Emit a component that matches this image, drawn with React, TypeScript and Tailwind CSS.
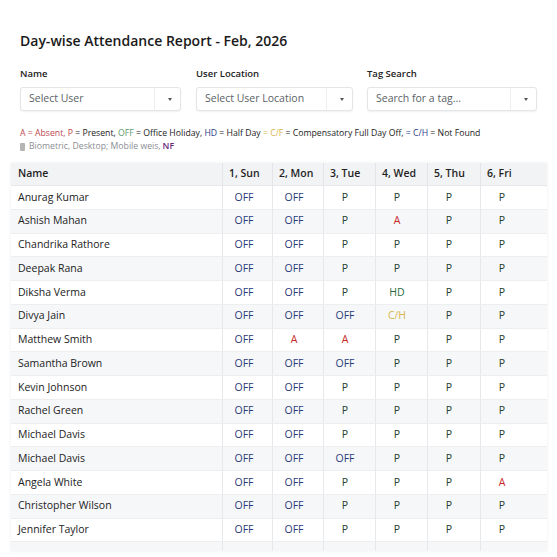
type Status = 'OFF' | 'P' | 'A' | 'HD' | 'C/H' | ''

interface Row {
  name: string
  days: Status[]
}

const days = ['1, Sun', '2, Mon', '3, Tue', '4, Wed', '5, Thu', '6, Fri']

const rows: Row[] = [
  { name: 'Anurag Kumar', days: ['OFF', 'OFF', 'P', 'P', 'P', 'P'] },
  { name: 'Ashish Mahan', days: ['OFF', 'OFF', 'P', 'A', 'P', 'P'] },
  { name: 'Chandrika Rathore', days: ['OFF', 'OFF', 'P', 'P', 'P', 'P'] },
  { name: 'Deepak Rana', days: ['OFF', 'OFF', 'P', 'P', 'P', 'P'] },
  { name: 'Diksha Verma', days: ['OFF', 'OFF', 'P', 'HD', 'P', 'P'] },
  { name: 'Divya Jain', days: ['OFF', 'OFF', 'OFF', 'C/H', 'P', 'P'] },
  { name: 'Matthew Smith', days: ['OFF', 'A', 'A', 'P', 'P', 'P'] },
  { name: 'Samantha Brown', days: ['OFF', 'OFF', 'OFF', 'P', 'P', 'P'] },
  { name: 'Kevin Johnson', days: ['OFF', 'OFF', 'P', 'P', 'P', 'P'] },
  { name: 'Rachel Green', days: ['OFF', 'OFF', 'P', 'P', 'P', 'P'] },
  { name: 'Michael Davis', days: ['OFF', 'OFF', 'P', 'P', 'P', 'P'] },
  { name: 'Michael Davis', days: ['OFF', 'OFF', 'OFF', 'P', 'P', 'P'] },
  { name: 'Angela White', days: ['OFF', 'OFF', 'P', 'P', 'P', 'A'] },
  { name: 'Christopher Wilson', days: ['OFF', 'OFF', 'P', 'P', 'P', 'P'] },
  { name: 'Jennifer Taylor', days: ['OFF', 'OFF', 'P', 'P', 'P', 'P'] },
  // partially scrolled row, clipped by the container
  { name: '', days: ['', '', '', '', '', ''] },
]

const statusColor: Record<Status, string> = {
  OFF: 'text-[#2b3a7a]',
  P: 'text-[#22402e]',
  A: 'text-[#c62828]',
  HD: 'text-[#2e6b3c]',
  'C/H': 'text-[#d6b54a]',
  '': '',
}

// column template shared by header and rows
const cols = 'grid grid-cols-[211px_50px_51px_52px_52px_53px_1fr]'

function SelectBox({ placeholder, width }: { placeholder: string; width: string }) {
  return (
    <div
      className={`${width} h-[24px] flex items-center bg-white border border-[#e3e5e8] rounded-[3px] shadow-[0_1px_2px_rgba(0,0,0,0.06)]`}
    >
      <span className="flex-1 pl-[8px] text-[10.5px] text-[#5b5f66] truncate">{placeholder}</span>
      <div className="h-full w-[14px] border-l border-[#eceef0]" />
      <div className="w-[12px] flex justify-start">
        <div className="w-0 h-0 border-l-[2.5px] border-r-[2.5px] border-t-[3px] border-l-transparent border-r-transparent border-t-[#555]" />
      </div>
    </div>
  )
}

export default function App() {
  return (
    <div className="w-[557px] h-[557px] overflow-hidden bg-white font-['Open_Sans',sans-serif] text-[#222]">
      {/* title */}
      <h1 className="pl-[20px] pt-[31px] text-[14px] leading-[20px] font-semibold text-[#1a1a1a]">
        Day-wise Attendance Report - Feb, 2026
      </h1>

      {/* filters */}
      <div className="flex pl-[20px] mt-[16px]">
        <div className="w-[176px]">
          <div className="text-[9.5px] font-semibold leading-[13px] mb-[7px]">Name</div>
          <SelectBox placeholder="Select User" width="w-[161px]" />
        </div>
        <div className="w-[171px]">
          <div className="text-[9.5px] font-semibold leading-[13px] mb-[7px]">User Location</div>
          <SelectBox placeholder="Select User Location" width="w-[157px]" />
        </div>
        <div>
          <div className="text-[9.5px] font-semibold leading-[13px] mb-[7px]">Tag Search</div>
          <SelectBox placeholder="Search for a tag..." width="w-[170px]" />
        </div>
      </div>

      {/* legend */}
      <div className="pl-[20px] mt-[16px] text-[8.7px] leading-[13px]">
        <div className="whitespace-nowrap">
          <span className="text-[#c0464f]">A = Absent, P</span>
          <span className="text-[#222]"> = Present, </span>
          <span className="text-[#5e9a6a]">OFF</span>
          <span className="text-[#222]"> = Office Holiday, </span>
          <span className="text-[#2b3a8a]">HD</span>
          <span className="text-[#222]"> = Half Day </span>
          <span className="text-[#d6b54a]">= C/F</span>
          <span className="text-[#222]"> = Compensatory Full Day Off, </span>
          <span className="text-[#2b3a8a]">= C/H</span>
          <span className="text-[#222]"> = Not Found</span>
        </div>
        <div className="flex items-center gap-[4px] whitespace-nowrap">
          <span className="inline-block w-[5px] h-[8px] rounded-[1px] bg-[#b5b5b5]" />
          <span className="text-[#8a8d92]">Biometric, Desktop; Mobile weis,</span>
          <span className="text-[#6a2a7a] font-semibold -ml-[2px]">NF</span>
        </div>
      </div>

      {/* table */}
      <div className="ml-[11px] mt-[10px] w-[536px] h-[388px] overflow-hidden shadow-[0_0_3px_rgba(0,0,0,0.08)] text-[10.5px]">
        <div className={`${cols} h-[23px] bg-[#f2f3f5] border-b border-[#e6e8eb] font-semibold text-[#1f1f1f]`}>
          <div className="flex items-center pl-[7px]">Name</div>
          {days.map((d) => (
            <div key={d} className="flex items-center pl-[6px] border-l border-[#e3e5e8]">
              {d}
            </div>
          ))}
        </div>
        {rows.map((r, i) => (
          <div
            key={i}
            className={`${cols} h-[23.75px] border-b border-[#eceef0] ${i % 2 === 0 ? 'bg-white' : 'bg-[#f6f7f9]'}`}
          >
            <div className="flex items-center pl-[7px] text-[#222]">{r.name}</div>
            {r.days.map((s, j) => (
              <div key={j} className="flex items-center pl-[6px] border-l border-[#e6e8eb]">
                <span className={`inline-block w-[30px] text-center font-medium ${statusColor[s]}`}>{s}</span>
              </div>
            ))}
          </div>
        ))}
      </div>
    </div>
  )
}
